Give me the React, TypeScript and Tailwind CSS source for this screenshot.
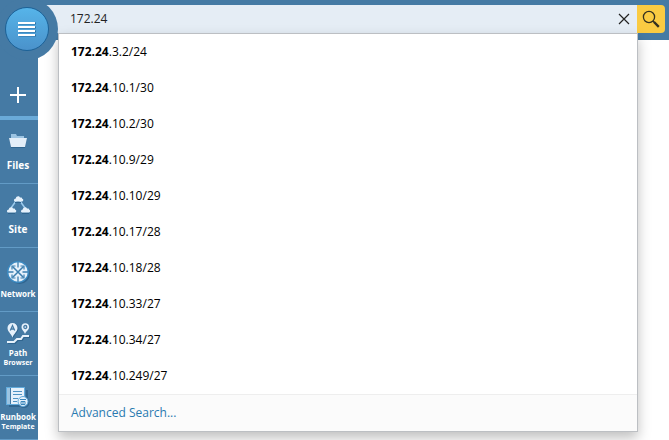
import type { ReactNode } from 'react'

const QUERY = '172.24'

const results = [
  '172.24.3.2/24',
  '172.24.10.1/30',
  '172.24.10.2/30',
  '172.24.10.9/29',
  '172.24.10.10/29',
  '172.24.10.17/28',
  '172.24.10.18/28',
  '172.24.10.33/27',
  '172.24.10.34/27',
  '172.24.10.249/27',
]

function FilesIcon() {
  return (
    <svg width="20" height="20" viewBox="0 0 20 20" aria-hidden="true">
      <path d="M3 3h5l1 2h7v6H3z" fill="#9cc4e2" />
      <path d="M1 7h18l-2 10H3z" fill="#30658f" />
      <path d="M1 7h18l-2 9H3z" fill="#e3eef8" />
    </svg>
  )
}

function Cloud({ x, y }: { x: number; y: number }) {
  return (
    <g transform={`translate(${x} ${y})`}>
      <path
        d="M1.500 5.500C-.8 5.500-.3 2.700 1.800 2.500 2 .1 5.300-.4 6 1.600c1.800-.3 2.400.5 2.100 1.100 1.900.3 1.300 2.800-.4 2.800z"
        fill="#e6f1fb"
      />
    </g>
  )
}

function SiteIcon() {
  return (
    <svg width="24" height="20" viewBox="0 0 24 20" aria-hidden="true">
      <path d="M10 6 5 13M14 6l5 7" stroke="#9ccbed" strokeWidth="1.500" />
      <path d="M2 18.500h7M16 18.500h7M9 7.500h6" stroke="#30658f" />
      <Cloud x={8} y={1} />
      <Cloud x={1} y={12} />
      <Cloud x={15} y={12} />
    </svg>
  )
}

function NetworkIcon() {
  return (
    <svg width="26" height="26" viewBox="0 0 26 26" aria-hidden="true">
      <circle cx="14.500" cy="14.500" r="10.500" fill="#30658f" />
      <circle cx="13" cy="13" r="11" fill="#3c8bc3" />
      <circle cx="13" cy="13" r="9.700" fill="#e6f1fb" />
      <g stroke="#3b7eae" fill="none">
        <path d="M7.500 7.500l11 11M18.500 7.500l-11 11" strokeWidth="1.500" />
        <path d="M7 10.500V7h3.500M15.500 7H19v3.500M19 15.500V19h-3.500M10.500 19H7v-3.500" strokeWidth="1.200" />
        <path d="M13 3v5.500M13 17.500V23M3 13h5.500M17.500 13H23" strokeWidth="1.300" />
      </g>
    </svg>
  )
}

function PathIcon() {
  return (
    <svg width="26" height="22" viewBox="0 0 26 22" aria-hidden="true">
      <path d="M3 21h7l3-3h4l2-3h6" stroke="#30658f" strokeWidth="2" fill="none" />
      <path d="M2 20h7l3-3h4l2-3h6" stroke="#e6f1fb" strokeWidth="2" fill="none" />
      <path d="M8.500 16C7 12 3.500 10 3.500 6.500a5 5 0 0 1 10 0C13.500 10 10 12 8.500 16z" fill="#30658f" />
      <path d="M7.500 15.500C6 11.500 2.500 9.500 2.500 6a5 5 0 0 1 10 0C12.500 9.500 9 11.500 7.500 15.500z" fill="#e6f1fb" />
      <path d="M20 12c-1-3-3.500-4-3.500-7a3.800 3.800 0 0 1 7.600 0c0 3-3 4-4.100 7z" fill="#e6f1fb" />
      <path d="M5.300 8.500l2.200-5 2.200 5M6.200 7h2.700" stroke="#457aa4" strokeWidth="1.300" fill="none" />
      <circle cx="20.300" cy="5" r="1.500" stroke="#457aa4" strokeWidth="1.300" fill="none" />
    </svg>
  )
}

function RunbookIcon() {
  return (
    <svg width="26" height="22" viewBox="0 0 26 22" aria-hidden="true">
      <path d="M4 19h11v2H4zM21 4h2v10h-2z" fill="#30658f" />
      <rect x="1.500" y="1.500" width="18" height="17" fill="#e6f1fb" stroke="#62abdc" />
      <path d="M2 2h3v16H2z" fill="#9cc4e2" />
      <path d="M5.500 2v16" stroke="#457aa4" />
      <path d="M8 5.500h9M8 8.500h9M8 12.500h5M8 15.500h4" stroke="#4f93c3" strokeWidth="1.200" />
      <circle cx="19" cy="16.500" r="5.500" fill="#30658f" />
      <circle cx="18" cy="15.500" r="5" fill="#e6f1fb" stroke="#62abdc" />
      <path d="M15 13.500h6M16 15.500h4v3h-4zM18 15.500v3" stroke="#3b86bb" fill="none" />
    </svg>
  )
}

interface NavItemProps {
  icon: ReactNode
  label: string
  sub?: string
  small?: boolean
}

function NavItem({ icon, label, sub, small }: NavItemProps) {
  return (
    <button
      type="button"
      className="flex h-16 w-full flex-col items-center justify-end border-b border-[#629bc6] pr-[2px] pb-2 font-bold text-white"
    >
      <span className={sub || small ? 'mb-1' : 'mb-2'}>{icon}</span>
      <span
        className={
          sub || small
            ? `text-[8px] leading-[10px] whitespace-nowrap ${small ? 'mb-1' : ''}`
            : 'mb-1 text-[10px] leading-3'
        }
      >
        {label}
      </span>
      {sub && <span className="text-[7px] leading-[9px]">{sub}</span>}
    </button>
  )
}

function Sidebar() {
  return (
    <nav className="flex w-[38px] shrink-0 flex-col bg-[#457aa4]">
      <button
        type="button"
        aria-label="Add"
        className="flex h-[120px] items-end justify-center border-b-4 border-[#6aaad8] pr-[2px] pb-3"
      >
        <svg width="18" height="18" viewBox="0 0 18 18" aria-hidden="true">
          <path d="M9 1v16M1 9h16" stroke="#fff" strokeWidth="2" />
        </svg>
      </button>
      <NavItem icon={<FilesIcon />} label="Files" />
      <NavItem icon={<SiteIcon />} label="Site" />
      <NavItem icon={<NetworkIcon />} label="Network" small />
      <NavItem icon={<PathIcon />} label="Path" sub="Browser" />
      <NavItem icon={<RunbookIcon />} label="Runbook" sub="Template" />
    </nav>
  )
}

function MenuButton() {
  return (
    <div className="absolute top-[-2px] left-[-4px] z-20 rounded-full bg-[#457aa4] p-[9px]">
      <button
        type="button"
        aria-label="Menu"
        className="flex size-11 items-center justify-center rounded-full border border-[#1c6298] bg-linear-to-b from-[#56b4e9] to-[#4a92cb]"
      >
        <svg width="18" height="17" viewBox="0 0 18 17" aria-hidden="true">
          <path d="M1 2.500h17M1 6.500h17M1 10.500h17M1 14.500h17" stroke="#2c71a4" strokeWidth="2" />
          <path d="M0 2h17M0 6h17M0 10h17M0 14h17" stroke="#fff" strokeWidth="2" />
        </svg>
      </button>
    </div>
  )
}

function SearchResults() {
  return (
    <div className="absolute top-7 right-[27px] left-5 border border-[#bcbfc3] bg-white shadow-[0_6px_12px_rgba(0,0,0,0.25)]">
      <ul>
        {results.map((item) => (
          <li key={item} className="flex h-9 items-center px-3 text-black">
            <b>{QUERY}</b>
            {item.slice(QUERY.length)}
          </li>
        ))}
      </ul>
      <div className="flex h-[37px] items-center border-t border-[#eeeeee] bg-[#fbfbfb] px-3">
        <a href="#advanced" className="text-[#2a7ab0]">
          Advanced Search...
        </a>
      </div>
    </div>
  )
}

export default function App() {
  return (
    <div className="relative flex min-h-screen overflow-hidden bg-white font-['Open_Sans','Noto_Sans',sans-serif] text-[12px] leading-4">
      <MenuButton />
      <Sidebar />
      <main className="min-w-0 flex-1">
        <header className="h-10 bg-[#457aa4] pt-[5px] pr-1">
          <form className="relative flex h-7" onSubmit={(e) => e.preventDefault()}>
            <input
              type="text"
              aria-label="Search"
              defaultValue={QUERY}
              className="min-w-0 flex-1 bg-[#e5edf5] pl-8 text-[#222222] outline-none"
            />
            <button type="button" aria-label="Clear" className="flex w-7 items-center justify-center bg-[#e5edf5] pl-[2px]">
              <svg width="12" height="12" viewBox="0 0 12 12" aria-hidden="true">
                <path d="M1 1l10 10M11 1 1 11" stroke="#222" strokeWidth="1.200" />
              </svg>
            </button>
            <button
              type="submit"
              aria-label="Submit search"
              className="flex w-7 items-center justify-center rounded-r-sm bg-[#facb42]"
            >
              <svg width="18" height="18" viewBox="0 0 18 18" aria-hidden="true">
                <circle cx="7" cy="7" r="5.600" stroke="#333020" strokeWidth="1.300" fill="none" />
                <path d="m11 11 2 2" stroke="#333020" strokeWidth="1.500" />
                <path d="m12 12 4.800 4.800" stroke="#333020" strokeWidth="2.400" />
              </svg>
            </button>
            <SearchResults />
          </form>
        </header>
      </main>
    </div>
  )
}
